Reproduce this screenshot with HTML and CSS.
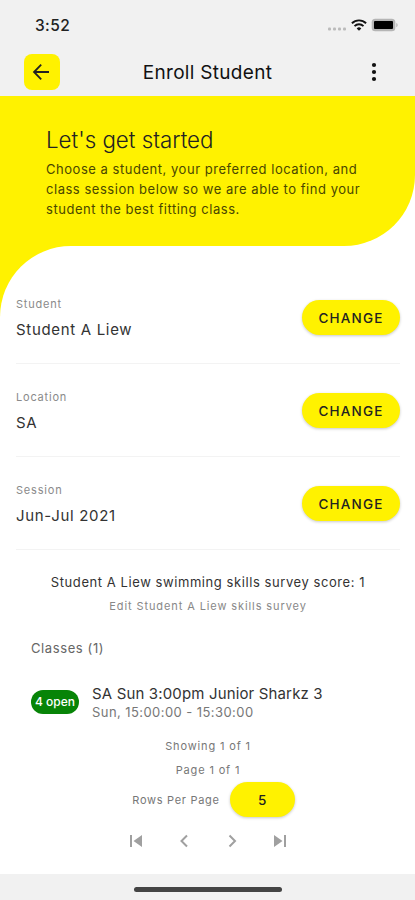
FILE: index.html
```html
<!DOCTYPE html>
<html lang="en">
	<head>
		<meta charset="utf-8">
		<meta name="viewport" content="width=device-width, initial-scale=1">
		<title>Enroll Student</title>
		<link rel="stylesheet" href="styles.css">
	</head>
	<body>
		<header class="header">
			<div class="statusbar">
				<span class="time">3:52</span>
				<div class="status-icons">
					<svg class="signal" width="20" height="4" viewBox="0 0 20 4" fill="#bbb">
						<rect x="1" y="0.5" width="3" height="3" rx="1"/>
						<rect x="6" y="0.5" width="3" height="3" rx="1"/>
						<rect x="11" y="0.5" width="3" height="3" rx="1"/>
						<rect x="16" y="0.5" width="3" height="3" rx="1"/>
					</svg>
					<svg class="wifi" width="16" height="12" viewBox="0 0 16 12" fill="none" stroke="#111" stroke-width="1.9">
						<path d="M0.9 4.3a10.2 10.2 0 0 1 14.2 0"/>
						<path d="M3.5 7.1a6.5 6.5 0 0 1 9 0"/>
						<path d="M8 11.8L5.7 9.4a3.4 3.4 0 0 1 4.6 0z" fill="#111" stroke="none"/>
					</svg>
					<svg class="battery" width="28" height="14" viewBox="0 0 28 14">
						<rect x="0.7" y="0.7" width="23.6" height="12.6" rx="3.5" fill="#b5b5b5"/>
						<rect x="3" y="3" width="19" height="8" rx="1" fill="#000"/>
						<path d="M25.3 5v4.2a2.3 2.3 0 0 0 0-4.2z" fill="#b5b5b5"/>
					</svg>
				</div>
			</div>
			<nav class="navbar">
				<button class="back" aria-label="Back">
					<svg width="18" height="18" viewBox="0 0 18 18" fill="none" stroke="#222" stroke-width="1.8">
						<path d="M9.2 1.600L2 9l7.200 7.400M2.200 9H17"/>
					</svg>
				</button>
				<h1 class="title">Enroll Student</h1>
				<button class="menu" aria-label="More">
					<svg width="6" height="20" viewBox="0 0 6 20" fill="#111">
						<circle cx="3" cy="3" r="2.1"/>
						<circle cx="3" cy="10" r="2.1"/>
						<circle cx="3" cy="17" r="2.1"/>
					</svg>
				</button>
			</nav>
		</header>

		<main class="main">
			<section class="hero">
				<div class="hero-text">
					<h2>Let's get started</h2>
					<p>Choose a student, your preferred location, and<br>class session below so we are able to find your<br>student the best fitting class.</p>
				</div>
			</section>

			<section class="panel">
				<div class="row">
					<div class="field">
						<span class="label">Student</span>
						<span class="value">Student A Liew</span>
					</div>
					<button class="pill">CHANGE</button>
				</div>
				<div class="row">
					<div class="field">
						<span class="label">Location</span>
						<span class="value">SA</span>
					</div>
					<button class="pill">CHANGE</button>
				</div>
				<div class="row">
					<div class="field">
						<span class="label">Session</span>
						<span class="value">Jun-Jul 2021</span>
					</div>
					<button class="pill">CHANGE</button>
				</div>

				<p class="score">Student A Liew swimming skills survey score: 1</p>
				<a class="edit">Edit Student A Liew skills survey</a>

				<h3 class="classes-title">Classes (1)</h3>
				<div class="class-item">
					<span class="badge">4 open</span>
					<div class="class-info">
						<span class="class-name">SA Sun 3:00pm Junior Sharkz 3</span>
						<span class="class-time">Sun, 15:00:00 - 15:30:00</span>
					</div>
				</div>

				<p class="small">Showing 1 of 1</p>
				<p class="small">Page 1 of 1</p>
				<div class="per-page">
					<span class="small">Rows Per Page</span>
					<button class="pill pill-small">5</button>
				</div>
				<div class="pager">
					<svg width="14" height="14" viewBox="0 0 14 14" fill="#a0a0a0"><path d="M1 1h2v12H1zM13 1v12L4.500 7z"/></svg>
					<svg width="14" height="14" viewBox="0 0 14 14" fill="none" stroke="#a0a0a0" stroke-width="2"><path d="M10 1.500L4.500 7l5.500 5.500"/></svg>
					<svg width="14" height="14" viewBox="0 0 14 14" fill="none" stroke="#a0a0a0" stroke-width="2"><path d="M4.500 1.500L10 7l-5.500 5.500"/></svg>
					<svg width="14" height="14" viewBox="0 0 14 14" fill="#a0a0a0"><path d="M11 1h2v12h-2zM1 1v12l8.500-6z"/></svg>
				</div>
			</section>
		</main>

		<footer class="footer">
			<div class="home-bar"></div>
		</footer>
	</body>
</html>
```
FILE: styles.css
```css
* {
	box-sizing: border-box;
}
:root {
	--yellow: #fff200;
	--bar: #f1f1f1;
}
body {
	margin: 0;
	height: 900px;
	display: flex;
	flex-direction: column;
	overflow: hidden;
	background: #fff;
	color: #222;
	font-family: Inter, "Liberation Sans", sans-serif;
}
h1, h2, h3, p {
	margin: 0;
	font-weight: 400;
}
button {
	border: 0;
	padding: 0;
	font-family: inherit;
	color: #222;
}
svg {
	display: block;
}

/* header */
.header {
	height: 96px;
	flex: none;
	background: var(--bar);
}
.statusbar {
	height: 50px;
	padding: 0 16px 0 35px;
	display: flex;
	align-items: center;
	justify-content: space-between;
}
.time {
	font-size: 15.5px;
	font-weight: 500;
	letter-spacing: 0.4px;
}
.status-icons {
	display: flex;
	align-items: center;
	gap: 4px;
}
.signal {
	margin-top: 8px;
}
.navbar {
	height: 44px;
	padding: 0 38px 0 24px;
	display: grid;
	grid-template-columns: 36px 1fr 6px;
	align-items: center;
}
.back {
	width: 36px;
	height: 36px;
	display: flex;
	align-items: center;
	justify-content: center;
	padding-right: 3px;
	border-radius: 8px;
	background: var(--yellow);
}
.title {
	padding-right: 16px;
	font-size: 19px;
	letter-spacing: 0.3px;
	text-align: center;
	color: #111;
}
.menu {
	background: none;
}

/* yellow top */
.main {
	flex: 1;
	background: linear-gradient(var(--yellow) 230px, #fff 230px);
}
.hero {
	height: 150px;
	background: linear-gradient(#fff, #fff) right bottom / 80px 80px no-repeat;
}
.hero-text {
	height: 150px;
	padding: 28px 0 0 46px;
	border-bottom-right-radius: 71px;
	background: var(--yellow);
}
.hero h2 {
	font-size: 22.3px;
	line-height: 32px;
	font-weight: 300;
}
.hero p {
	font-size: 13px;
	line-height: 20px;
	letter-spacing: 0.53px;
	margin-top: 3px;
	color: #4a4700;
	white-space: nowrap;
}

/* white sheet */
.panel {
	height: 628px;
	padding: 24px 15px 0 16px;
	display: flex;
	flex-direction: column;
	border-top-left-radius: 71px;
	background: #fff;
}
.row {
	height: 93px;
	flex: none;
	padding-top: 24px;
	display: flex;
	justify-content: space-between;
	box-shadow: 0 1px 0 #f3f3f3;
}
.field {
	display: flex;
	flex-direction: column;
}
.label {
	font-size: 11px;
	line-height: 20px;
	letter-spacing: 0.8px;
	color: #8a8a8a;
}
.value {
	margin-top: 6px;
	font-size: 15px;
	line-height: 20px;
	letter-spacing: 0.68px;
	color: #333;
}
.pill {
	width: 98px;
	height: 35px;
	margin-top: 6px;
	border-radius: 18px;
	background: var(--yellow);
	box-shadow: 0 1px 3px rgba(0, 0, 0, 0.22);
	font-size: 13.5px;
	font-weight: 500;
	letter-spacing: 1.2px;
}
.score {
	margin-top: 23px;
	font-size: 13px;
	line-height: 20px;
	letter-spacing: 0.57px;
	text-align: center;
	color: #333;
}
.edit {
	margin-top: 4px;
	font-size: 11px;
	line-height: 20px;
	letter-spacing: 0.9px;
	text-align: center;
	color: #888;
}
.classes-title {
	margin: 22px 0 0 15px;
	font-size: 13px;
	line-height: 20px;
	letter-spacing: 0.6px;
	color: #666;
}
.class-item {
	margin: 26px 0 0 15px;
	display: flex;
	align-items: center;
	gap: 13px;
}
.badge {
	width: 48px;
	height: 24px;
	margin-top: -2px;
	border-radius: 12px;
	background: #078407;
	color: #fff;
	font-size: 12px;
	font-weight: 500;
	line-height: 24px;
	text-align: center;
}
.class-info {
	display: flex;
	flex-direction: column;
}
.class-name {
	font-size: 15px;
	line-height: 20px;
	letter-spacing: 0.15px;
	color: #333;
}
.class-time {
	font-size: 13px;
	line-height: 17px;
	letter-spacing: 0.43px;
	color: #777;
}
.small {
	font-size: 11px;
	line-height: 24px;
	letter-spacing: 0.85px;
	text-align: center;
	color: #777;
}
.class-item + .small {
	margin-top: 13px;
}
.per-page {
	display: flex;
	align-items: center;
	justify-content: center;
	gap: 10px;
	margin-left: 11px;
}
.per-page .small {
	letter-spacing: 0.7px;
}
.pill-small {
	width: 65px;
	margin-top: 0;
	letter-spacing: 0;
}
.pager {
	margin: 17px 0 0 113px;
	display: flex;
	gap: 34px;
}

/* bottom bar */
.footer {
	height: 26px;
	flex: none;
	background: var(--bar);
	display: flex;
	justify-content: center;
	padding-top: 13px;
}
.home-bar {
	width: 148px;
	height: 5px;
	border-radius: 3px;
	background: #444;
}
```
